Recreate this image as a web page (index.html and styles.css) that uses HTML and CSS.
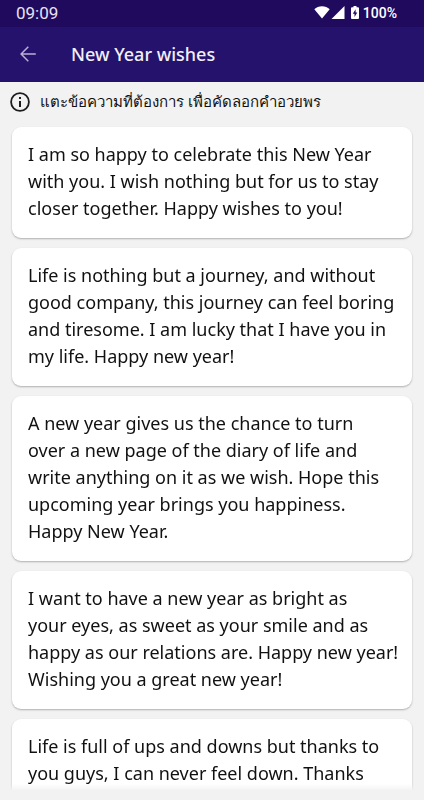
FILE: index.html
```html
<!DOCTYPE html>
<html lang="th">
<head>
    <meta charset="UTF-8">
    <meta name="viewport" content="width=device-width, initial-scale=1.0">
    <title>New Year wishes</title>
    <link rel="stylesheet" href="styles.css">
</head>
<body>

<!-- Status bar -->
<div class="status">
    <span class="status__time">09:09</span>
    <div class="status__icons">
        <svg width="16" height="13" viewBox="0 0 16 13" fill="#fff"><path d="M8 12.6 0.3 3.2C2.4 1.3 5 .3 8 .3s5.600 1 7.700 2.900z"/></svg>
        <svg width="14" height="13" viewBox="0 0 14 13" fill="#fff"><path d="M13.500 0v13H.5z"/></svg>
        <svg class="status__battery" width="8" height="13" viewBox="0 0 8 13"><path fill="#fff" d="M2.500 0h3v1.300H7q1 0 1 1V12q0 1-1 1H1q-1 0-1-1V2.300q0-1 1-1h1.500z"/><path fill="#1f0a5e" d="M4.600 3.300v3.200h1.700L3.500 11V7.800H1.800z"/></svg>
        <span>100%</span>
    </div>
</div>

<header class="toolbar">
    <button type="button" class="toolbar__back" aria-label="Back">
        <svg width="16" height="16" viewBox="0 0 16 16" fill="none" stroke="#b9b0d6" stroke-width="1.500"><path d="M15.800 8H1.300M8.300.8 1.100 8l7.200 7.200"/></svg>
    </button>
    <h1 class="toolbar__title">New Year wishes</h1>
</header>

<p class="hint">
    <svg width="20" height="20" viewBox="0 0 20 20" fill="none" stroke="#1c1c1c"><circle cx="10" cy="10" r="8.900" stroke-width="1.800"/><path stroke-width="2" d="M10 9v6M10 5v2"/></svg>
    <span>แตะข้อความที่ต้องการ เพื่อคัดลอกคำอวยพร</span>
</p>

<!-- Each card copies its own text -->
<main class="wishes">
    <button type="button" class="wish">I am so happy to celebrate this New Year with you. I wish nothing but for us to stay closer together. Happy wishes to you!</button>
    <button type="button" class="wish">Life is nothing but a journey, and without good company, this journey can feel boring and tiresome. I am lucky that I have you in my life. Happy new year!</button>
    <button type="button" class="wish">A new year gives us the chance to turn<br> over a new page of the diary of life and<br> write anything on it as we wish. Hope this<br> upcoming year brings you happiness.<br> Happy New Year.</button>
    <button type="button" class="wish">I want to have a new year as bright as<br> your eyes, as sweet as your smile and as<br> happy as our relations are. Happy new year!<br> Wishing you a great new year!</button>
    <button type="button" class="wish">Life is full of ups and downs but thanks to you guys, I can never feel down. Thanks</button>
</main>

<script>
document.querySelectorAll('.wish').forEach(function (wish) {
    wish.addEventListener('click', function () {
        navigator.clipboard.writeText(wish.textContent);
    });
});
</script>

</body>
</html>
```

FILE: styles.css
```css
* { box-sizing: border-box; }

body {
    display: flex;
    flex-direction: column;
    height: 100vh;
    margin: 0;
    padding-bottom: 9px;
    overflow: hidden;
    background: #f2f2f2;
    color: #111;
    font-family: "Noto Sans", sans-serif;
}

button { border: 0; font: inherit; color: inherit; cursor: pointer; }
svg { display: block; flex: none; }

/* Status bar */
.status {
    display: flex;
    align-items: center;
    justify-content: space-between;
    height: 27px;
    padding: 0 27px 2px 16px;
    background: #1f0a5e;
    color: #fff;
    font-family: Roboto, sans-serif;
    font-size: 14px;
    flex: none;
}
.status__time { font-size: 17px; color: #e6e2f2; }
.status__icons { display: flex; align-items: center; gap: 1px; font-weight: 500; }
.status__battery { margin: 0 3px 0 5px; }

/* Toolbar */
.toolbar {
    display: flex;
    align-items: center;
    gap: 27px;
    height: 55px;
    padding: 0 12px 2px;
    background: #25126c;
    color: #f1eff8;
    flex: none;
}
.toolbar__back {
    display: flex;
    align-items: center;
    justify-content: center;
    width: 32px;
    height: 32px;
    padding: 0;
    background: none;
}
.toolbar__title { margin: 0; font-size: 18px; font-weight: 500; }

.hint {
    display: flex;
    align-items: center;
    gap: 10px;
    height: 40px;
    margin: 0;
    padding: 0 10px;
    font-size: 15px;
    font-weight: 300;
    flex: none;
}

/* Cards */
.wishes {
    display: flex;
    flex-direction: column;
    gap: 10px;
    flex: 1;
    min-height: 0;
    padding: 5px 12px 0;
    overflow-y: auto;
    scrollbar-width: none;
    -webkit-mask-image: linear-gradient(to top, transparent, #000 7px);
    mask-image: linear-gradient(to top, transparent, #000 7px);
}
.wish {
    flex: none;
    padding: 14px 8px 16px 16px;
    border-radius: 9px;
    background: #fff;
    box-shadow: 0 1px 2px rgba(0, 0, 0, 0.28);
    font-size: 18px;
    font-weight: 400;
    line-height: 27px;
    text-align: left;
}
```
